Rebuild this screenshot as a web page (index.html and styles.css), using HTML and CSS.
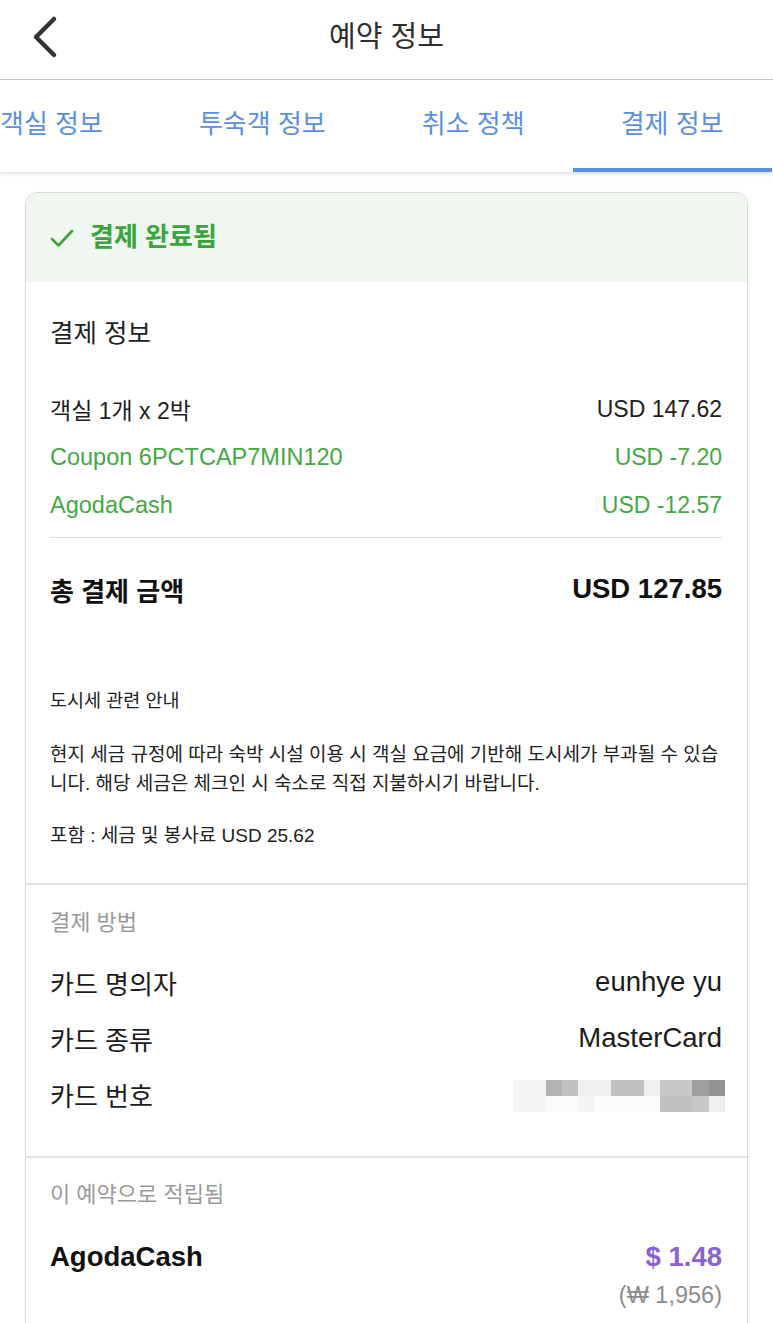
FILE: index.html
```html
<!DOCTYPE html>
<html lang="ko">
<head>
<meta charset="utf-8">
<title>예약 정보</title>
<link rel="stylesheet" href="styles.css">
</head>
<body>
<div class="page">
  <header class="topbar">
    <button class="back" aria-label="뒤로">
      <svg width="30" height="44" viewBox="0 0 30 44"><path d="M23 4 L5 22 L23 40" fill="none" stroke="#333" stroke-width="4.5" stroke-linecap="round" stroke-linejoin="round"/></svg>
    </button>
    <h1 class="title">예약 정보</h1>
    <span></span>
  </header>

  <nav class="tabs">
    <div class="tab-row">
      <a class="tab">객실 정보</a>
      <a class="tab">투숙객 정보</a>
      <a class="tab">취소 정책</a>
      <a class="tab active">결제 정보</a>
    </div>
  </nav>

  <main class="content">
    <section class="card">
      <div class="status">
        <svg class="check" width="24" height="20" viewBox="0 0 24 20"><path d="M2 11 L8.5 17.5 L22 3" fill="none" stroke="#3aa53c" stroke-width="2.6" stroke-linecap="round" stroke-linejoin="round"/></svg>
        <span>결제 완료됨</span>
      </div>

      <div class="section summary">
        <h2 class="sec-title">결제 정보</h2>
        <div class="lines">
          <div class="line"><span>객실 1개 x 2박</span><span>USD 147.62</span></div>
          <div class="line green"><span>Coupon 6PCTCAP7MIN120</span><span>USD -7.20</span></div>
          <div class="line green"><span>AgodaCash</span><span>USD -12.57</span></div>
        </div>
        <div class="divider"></div>
        <div class="total"><span>총 결제 금액</span><span class="total-amt">USD 127.85</span></div>

        <p class="note-title">도시세 관련 안내</p>
        <p class="note">현지 세금 규정에 따라 숙박 시설 이용 시 객실 요금에 기반해 도시세가 부과될 수 있습니다. 해당 세금은 체크인 시 숙소로 직접 지불하시기 바랍니다.</p>
        <p class="note incl">포함 : 세금 및 봉사료 USD 25.62</p>
      </div>

      <div class="section method">
        <h3 class="label">결제 방법</h3>
        <div class="info">
          <div class="info-row"><span>카드 명의자</span><span>eunhye yu</span></div>
          <div class="info-row"><span>카드 종류</span><span>MasterCard</span></div>
          <div class="info-row"><span>카드 번호</span>
            <span class="blur">
              <i class="p1"></i><i class="p1"></i><i class="p5"></i><i class="p4"></i><i class="p2"></i><i class="p2"></i><i class="p4"></i><i class="p4"></i><i class="p2"></i><i class="p3"></i><i class="p3"></i><i class="p6"></i><i class="p7"></i>
              <i class="p1"></i><i class="p1"></i><i class="p0"></i><i class="p0"></i><i class="p1"></i><i class="p0"></i><i class="p0"></i><i class="p0"></i><i class="p0"></i><i class="p4"></i><i class="p4"></i><i class="p3"></i><i class="p2"></i>
            </span>
          </div>
        </div>
      </div>

      <div class="section earned">
        <h3 class="label">이 예약으로 적립됨</h3>
        <div class="cash"><span>AgodaCash</span><span class="cash-amt">$ 1.48</span></div>
        <div class="krw">(₩ 1,956)</div>
      </div>
    </section>
  </main>
</div>
</body>
</html>
```

FILE: styles.css
```css
html, body {
  margin: 0;
  padding: 0;
  background: #fff;
}

body {
  font-family: "Liberation Sans", "Noto Sans CJK KR", sans-serif;
  color: #1c1c1c;
}

.page {
  width: 773px;
  height: 1323px;
  overflow: hidden;
}

.topbar {
  height: 79px;
  border-bottom: 1px solid #c8c8c8;
  display: grid;
  grid-template-columns: 1fr auto 1fr;
  align-items: center;
}

.back {
  justify-self: start;
  margin-left: 31px;
  margin-top: -6px;
  padding: 0;
  border: 0;
  background: none;
  width: 30px;
  height: 44px;
}

.title {
  margin: 0;
  font-size: 29px;
  font-weight: 400;
  color: #2e2e2e;
  line-height: 36px;
  margin-top: -6px;
}

.tabs {
  height: 92px;
  box-shadow: 0 2px 4px rgba(0, 0, 0, 0.13);
  position: relative;
  overflow: hidden;
}

.tab-row {
  display: flex;
  margin-left: -48px;
  height: 92px;
}

.tab {
  flex: none;
  box-sizing: border-box;
  height: 92px;
  padding: 0 48px;
  display: flex;
  align-items: center;
  border-bottom: 4px solid transparent;
  font-size: 26px;
  color: #5c8fdd;
  line-height: 30px;
}

.tab.active {
  border-bottom-color: #5a8fe4;
}

.content {
  padding: 20px 25px 0;
}

.card {
  border: 1px solid #dadada;
  border-radius: 12px;
  overflow: hidden;
  box-shadow: 0 0 3px rgba(0, 0, 0, 0.05);
}

.status {
  height: 89px;
  background: #f0f6f0;
  display: flex;
  align-items: center;
  gap: 16px;
  padding: 0 24px;
  color: #3aa53c;
  font-size: 26px;
  font-weight: 700;
  line-height: 32px;
}

.status span {
  margin-top: -2px;
}

.section {
  padding: 0 25px 0 24px;
}

.summary {
  padding-top: 33px;
  padding-bottom: 33px;
  border-bottom: 2px solid #e3e3e3;
}

.sec-title {
  margin: 0;
  font-size: 25.5px;
  font-weight: 400;
  line-height: 36px;
  color: #222;
}

.lines {
  margin-top: 34px;
}

.line {
  display: flex;
  justify-content: space-between;
  align-items: center;
  height: 48px;
  font-size: 23px;
  color: #1e1e1e;
}

.line.green span:first-child {
  font-size: 23.5px;
}

.line.green {
  color: #45a843;
}

.divider {
  height: 1px;
  background: #d8d8d8;
  margin-top: 8px;
}

.total {
  display: flex;
  justify-content: space-between;
  align-items: center;
  height: 40px;
  margin-top: 31px;
  font-size: 26px;
  font-weight: 700;
  color: #111;
}

.total-amt {
  font-size: 27.5px;
}

.note-title,
.note {
  margin: 0;
  font-size: 19px;
  line-height: 29px;
  color: #222;
}

.note-title {
  font-size: 18.5px;
  margin-top: 77px;
}

.note {
  margin-top: 25px;
}

.note.incl {
  margin-top: 23px;
}

.method {
  padding-top: 23px;
  padding-bottom: 34px;
  border-bottom: 2px solid #e3e3e3;
}

.label {
  margin: 0;
  font-size: 22px;
  font-weight: 400;
  line-height: 30px;
  color: #9a9a9a;
}

.info {
  margin-top: 16px;
}

.info-row {
  display: flex;
  justify-content: space-between;
  align-items: center;
  height: 56px;
  font-size: 26px;
  color: #1c1c1c;
}

.info-row span:last-child {
  font-size: 27.5px;
}

.blur {
  display: grid;
  grid-template-columns: repeat(13, 16.3px);
  grid-auto-rows: 16px;
  margin-right: -3px;
  margin-top: 4px;
}

.blur i { display: block; }
.p0 { background: #fbfbfb; }
.p1 { background: #f5f5f5; }
.p2 { background: #efefef; }
.p3 { background: #c8c8c8; }
.p4 { background: #c1c1c1; }
.p5 { background: #b3b3b3; }
.p6 { background: #9e9e9e; }
.p7 { background: #939393; }

.earned {
  padding-top: 22px;
  padding-bottom: 40px;
}

.cash {
  display: flex;
  justify-content: space-between;
  align-items: center;
  height: 36px;
  margin-top: 29px;
  font-size: 27.5px;
  font-weight: 700;
  color: #111;
}

.cash-amt {
  color: #8a62d2;
  font-size: 27.5px;
}

.krw {
  margin-top: 6px;
  text-align: right;
  font-size: 23.5px;
  line-height: 28px;
  color: #8c8c8c;
}
```
